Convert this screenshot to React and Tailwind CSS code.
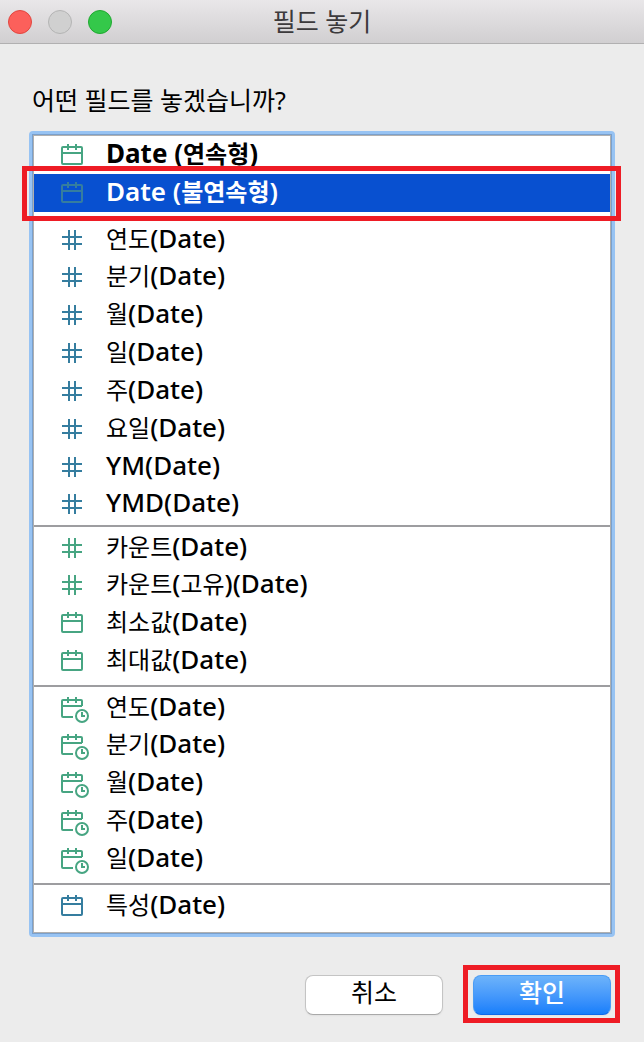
import { useState } from "react";

const GREEN = "text-[#47a582]";
const BLUE = "text-[#357d9f]";

const groups = [
  {
    style: "pb-2",
    rows: [
      { id: "date-continuous", icon: "calendar", color: GREEN, label: "Date (연속형)", bold: true, raised: true },
      { id: "date-discrete", icon: "calendar", color: BLUE, label: "Date (불연속형)", raised: true },
    ],
  },
  {
    style: "pb-[5px] border-b-2",
    rows: [
      { id: "year", icon: "hash", color: BLUE, label: "연도(Date)", short: true },
      { id: "quarter", icon: "hash", color: BLUE, label: "분기(Date)" },
      { id: "month", icon: "hash", color: BLUE, label: "월(Date)" },
      { id: "day", icon: "hash", color: BLUE, label: "일(Date)" },
      { id: "week", icon: "hash", color: BLUE, label: "주(Date)" },
      { id: "weekday", icon: "hash", color: BLUE, label: "요일(Date)" },
      { id: "ym", icon: "hash", color: BLUE, label: "YM(Date)" },
      { id: "ymd", icon: "hash", color: BLUE, label: "YMD(Date)", short: true },
    ],
  },
  {
    style: "pt-px pb-[7px] border-b-2",
    rows: [
      { id: "count", icon: "hash", color: GREEN, label: "카운트(Date)", short: true },
      { id: "count-distinct", icon: "hash", color: GREEN, label: "카운트(고유)(Date)" },
      { id: "min", icon: "calendar", color: GREEN, label: "최소값(Date)" },
      { id: "max", icon: "calendar", color: GREEN, label: "최대값(Date)" },
    ],
  },
  {
    style: "pt-px pb-[7px] border-b-2",
    rows: [
      { id: "year-trunc", icon: "clock", color: GREEN, label: "연도(Date)", short: true },
      { id: "quarter-trunc", icon: "clock", color: GREEN, label: "분기(Date)" },
      { id: "month-trunc", icon: "clock", color: GREEN, label: "월(Date)" },
      { id: "week-trunc", icon: "clock", color: GREEN, label: "주(Date)" },
      { id: "day-trunc", icon: "clock", color: GREEN, label: "일(Date)" },
    ],
  },
  {
    style: "pt-px pb-[10px]",
    rows: [{ id: "attribute", icon: "calendar", color: BLUE, label: "특성(Date)", short: true }],
  },
];

function FieldIcon({ type, color }) {
  return (
    <svg className={`w-7 h-7 shrink-0 overflow-visible ${color}`} viewBox="0 0 28 28" fill="none" stroke="currentColor" strokeWidth="2" aria-hidden="true">
      {type === "hash" && <path d="M8 6v20M14 6v20M1 13h20M1 20h20" />}
      {type === "calendar" && (
        <>
          <rect x="1" y="8" width="20" height="17" rx="1" />
          <path d="M1 14h20M7 5v6M15 5v6" />
        </>
      )}
      {type === "clock" && (
        <>
          <path d="M12 25H2a1 1 0 0 1-1-1V9a1 1 0 0 1 1-1h18a1 1 0 0 1 1 1v5M1 14h20M7 5v6M15 5v6" />
          <circle cx="21" cy="24" r="6" />
          <path d="M21 20v4h3" />
        </>
      )}
    </svg>
  );
}

// Hangul is set a little smaller and lighter than the latin letters next to it
function Label({ text, strong }) {
  return text.split(/([가-힣]+)/).map((part, i) =>
    /[가-힣]/.test(part) ? (
      <span key={i} className={`text-2xl leading-none ${strong ? "" : "font-normal"}`}>{part}</span>
    ) : (
      part
    )
  );
}

function FieldRow({ row, selected, onSelect }) {
  let weight = "font-medium";
  if (selected) weight = "font-semibold";
  if (row.bold) weight = "font-bold";

  return (
    <li className="relative">
      <button
        type="button"
        aria-pressed={selected}
        onClick={onSelect}
        className={`flex w-full items-center gap-[17px] pl-[27px] text-left text-[26px] leading-none whitespace-pre ${weight} ${
          row.short ? "h-9" : "h-[38px]"
        } ${row.raised ? "pb-1" : ""} ${selected ? "bg-[#0850d0] text-white" : "text-black"}`}
      >
        <FieldIcon type={row.icon} color={row.color} />
        <span>
          <Label text={row.label} strong={selected || row.bold} />
        </span>
      </button>
      {selected && (
        <div className="pointer-events-none absolute z-10 -top-2 -bottom-[9px] -left-3 -right-[11px] border-5 border-[#ee1c25]" />
      )}
    </li>
  );
}

export default function App() {
  const [selected, setSelected] = useState("date-discrete");

  return (
    <div className="min-h-screen bg-[#ececec] font-['Noto_Sans','Noto_Sans_CJK_KR',sans-serif] text-black">
      {/* Title bar */}
      <header className="grid grid-cols-[1fr_auto_1fr] items-center h-11 px-2 border-b border-[#b1b0b1] bg-linear-to-b from-[#e9e7e9] to-[#d1cfd1]">
        <div className="flex gap-4">
          <button type="button" aria-label="닫기" className="size-6 rounded-full border border-[#e2463f] bg-[#fc605b]" />
          <button type="button" aria-label="최소화" disabled className="size-6 rounded-full border border-[#b4b4b4] bg-[#d0d0d0]" />
          <button type="button" aria-label="확대" className="size-6 rounded-full border border-[#1fa930] bg-[#34c84a]" />
        </div>
        <h1 className="text-[25px] leading-none text-[#3c3a3c]">필드 놓기</h1>
      </header>

      <main className="px-[29px] pt-10">
        <h2 className="pl-[3px] text-[25px] leading-8">어떤 필드를 놓겠습니까?</h2>

        {/* Field list */}
        <div className="mt-[15px] rounded-sm border-3 border-[#97c3f3]">
          <div className="border border-[#7aa0cc]">
            <div className="border border-[#b0b0b0] bg-white">
              {groups.map((group, g) => (
                <ul key={g} className={`border-[#9d9da0] ${group.style}`}>
                  {group.rows.map((row) => (
                    <FieldRow
                      key={row.id}
                      row={row}
                      selected={selected === row.id}
                      onSelect={() => setSelected(row.id)}
                    />
                  ))}
                </ul>
              ))}
            </div>
          </div>
        </div>

        {/* Buttons */}
        <div className="mt-[38px] flex justify-end gap-[30px] pr-1">
          <button type="button" className="h-10 w-[138px] rounded-lg border border-[#c4c4c4] border-b-[#a9a9a9] bg-white pb-1.5 text-[25px] leading-none shadow-xs">
            취소
          </button>
          <div className="relative">
            <button type="button" className="h-10 w-[138px] rounded-lg border border-[#4a9cf5] border-b-[#1068e8] bg-linear-to-b from-[#6db3fa] to-[#157efb] pb-1.5 text-[25px] leading-none font-medium text-white shadow-xs">
              확인
            </button>
            <div className="pointer-events-none absolute -left-[10px] -right-[9px] -top-[10px] -bottom-2 border-5 border-[#ee1c25]" />
          </div>
        </div>
      </main>
    </div>
  );
}
